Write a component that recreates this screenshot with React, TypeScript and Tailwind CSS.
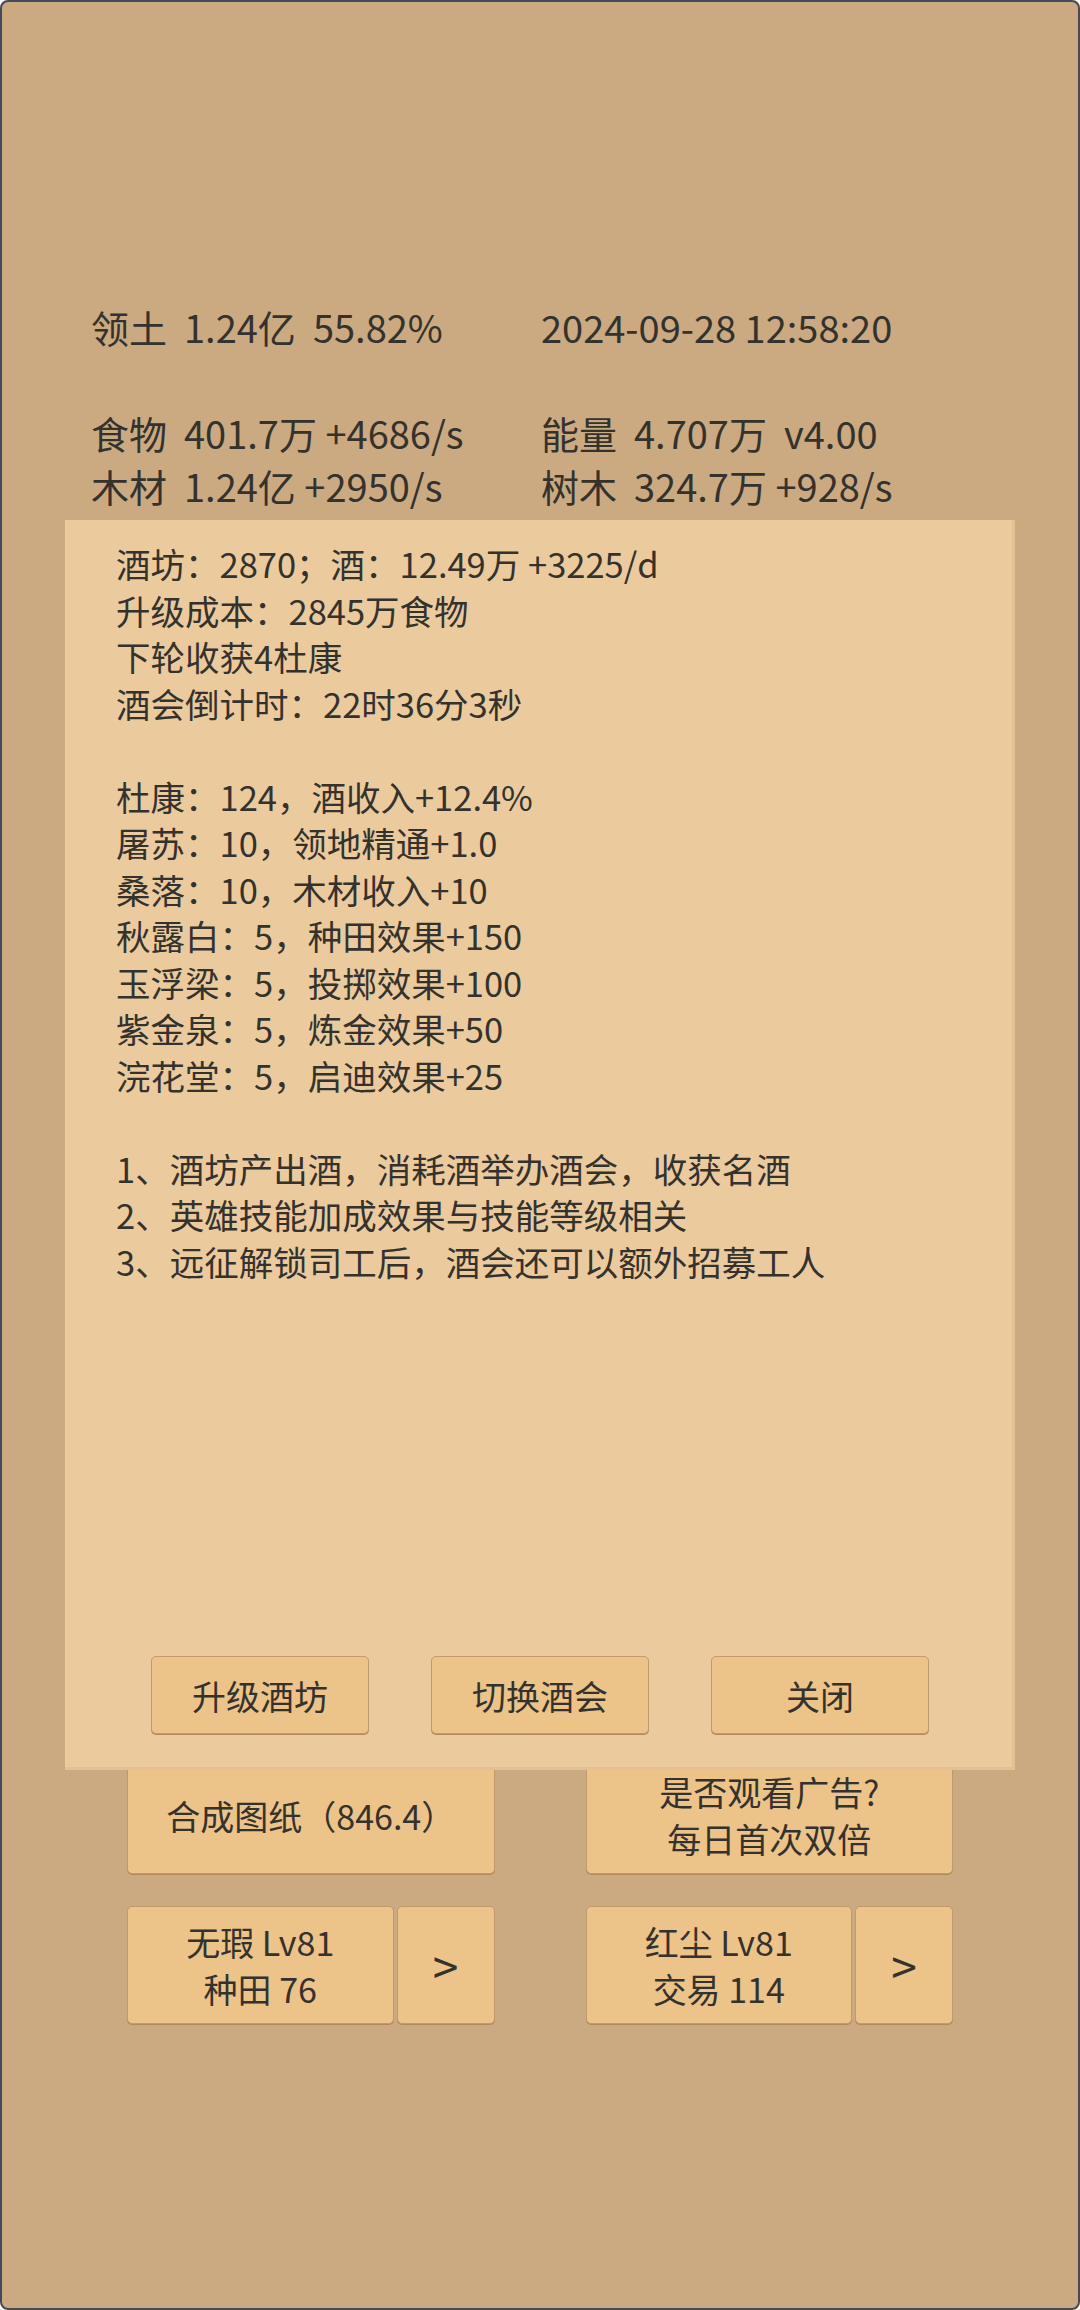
import React from "react";

const font = { fontFamily: '"Noto Sans CJK SC", "Noto Sans", sans-serif' };

const stats = [
  ["领土  1.24亿  55.82%", "2024-09-28 12:58:20"],
  ["", ""],
  ["食物  401.7万 +4686/s", "能量  4.707万  v4.00"],
  ["木材  1.24亿 +2950/s", "树木  324.7万 +928/s"],
];

const info = [
  "酒坊：2870；酒：12.49万 +3225/d",
  "升级成本：2845万食物",
  "下轮收获4杜康",
  "酒会倒计时：22时36分3秒",
  "",
  "杜康：124，酒收入+12.4%",
  "屠苏：10，领地精通+1.0",
  "桑落：10，木材收入+10",
  "秋露白：5，种田效果+150",
  "玉浮梁：5，投掷效果+100",
  "紫金泉：5，炼金效果+50",
  "浣花堂：5，启迪效果+25",
  "",
  "1、酒坊产出酒，消耗酒举办酒会，收获名酒",
  "2、英雄技能加成效果与技能等级相关",
  "3、远征解锁司工后，酒会还可以额外招募工人",
];

const btn =
  "bg-[#ecc388] border border-[#bf9a6c] rounded-[5px] shadow-[0_1px_0_#b08a5c] flex items-center justify-center text-center text-[#34322d]";

const Hero = ({ name, skill }: { name: string; skill: string }) => (
  <div className="flex gap-[3px] h-[118px]">
    <div className={`${btn} flex-1 flex-col text-[34px] leading-[47px]`}>
      <span>{name}</span>
      <span>{skill}</span>
    </div>
    <div className={`${btn} w-[98px] text-[46px]`}>&gt;</div>
  </div>
);

export default function App() {
  return (
    <div
      style={font}
      className="relative w-[1080px] h-[2310px] overflow-hidden bg-[#cbaa82] border-2 border-[#434a58] rounded-[8px] text-[#34322d]"
    >
      {/* stats */}
      <div className="pt-[298px] pl-[89px] text-[38px] leading-[53px]">
        {stats.map((r, i) => (
          <div key={i} className="grid grid-cols-[450px_1fr] whitespace-pre h-[53px]">
            <span>{r[0]}</span>
            <span>{r[1]}</span>
          </div>
        ))}
      </div>

      {/* buttons under the dialog */}
      <div className="mt-[1244px] px-[125px] grid grid-cols-2 gap-x-[91px] gap-y-[32px]">
        <div className={`${btn} h-[118px] text-[34px]`}>合成图纸（846.4）</div>
        <div className={`${btn} h-[118px] flex-col text-[34px] leading-[47px]`}>
          <span>是否观看广告?</span>
          <span>每日首次双倍</span>
        </div>
        <Hero name="无瑕 Lv81" skill="种田 76" />
        <Hero name="红尘 Lv81" skill="交易 114" />
      </div>

      {/* dialog */}
      <div className="absolute left-[63px] top-[518px] w-[950px] h-[1250px] bg-[#ebcb9e] shadow-[inset_-3px_-3px_0_#e3c192] flex flex-col">
        <div className="pt-[20px] pl-[51px] text-[34.5px] leading-[46.5px] whitespace-pre">
          {info.map((l, i) => (
            <div key={i} className="h-[46.5px]">{l}</div>
          ))}
        </div>
        <div className="mt-auto mb-[36px] flex justify-center gap-[62px]">
          {["升级酒坊", "切换酒会", "关闭"].map((t) => (
            <div key={t} className={`${btn} w-[218px] h-[78px] text-[34px]`}>
              {t}
            </div>
          ))}
        </div>
      </div>
    </div>
  );
}
